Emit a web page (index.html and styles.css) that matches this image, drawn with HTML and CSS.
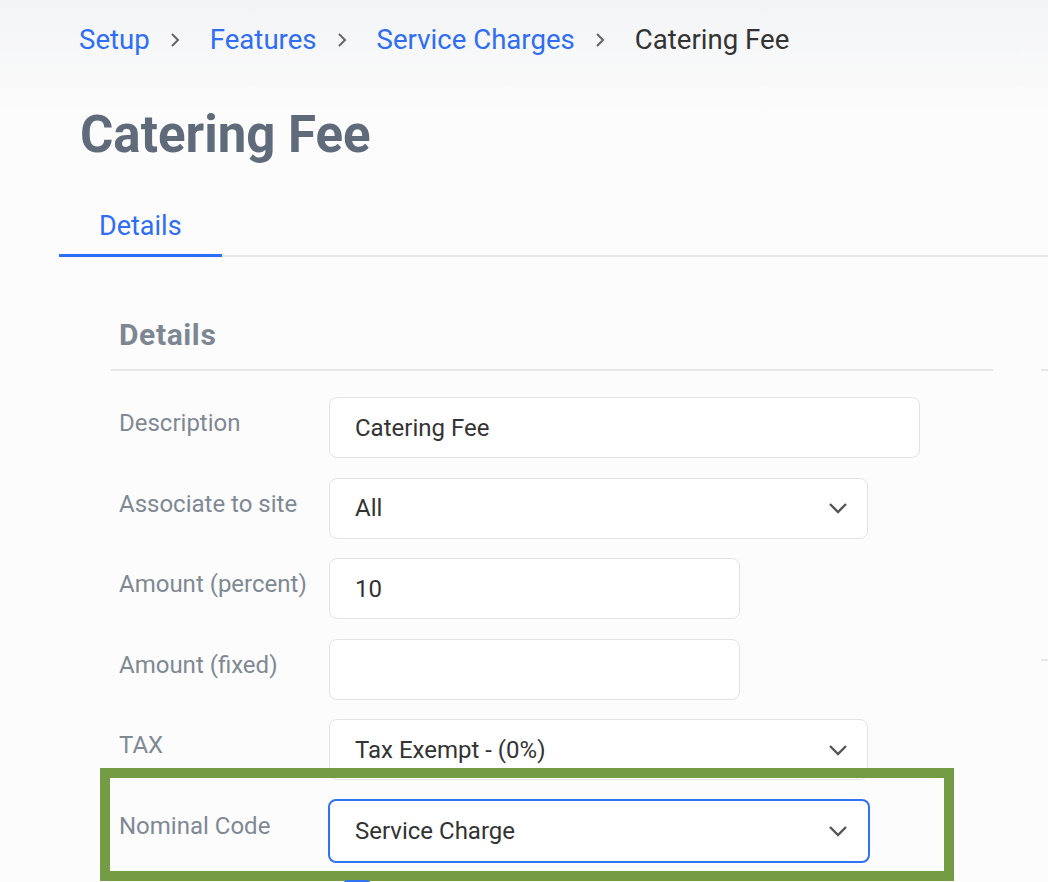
FILE: index.html
```html
<!DOCTYPE html>
<html lang="en">
<head>
    <meta charset="UTF-8">
    <meta name="viewport" content="width=device-width, initial-scale=1.0">
    <title>Catering Fee</title>
    <link rel="stylesheet" href="styles.css">
</head>
<body>
    <div class="header">
        <div class="breadcrumb">
            <a href="#">Setup</a>
            <svg class="crumb-sep" width="12" height="18" viewBox="0 0 12 18"><polyline points="3,3 9,9 3,15" fill="none" stroke="#666" stroke-width="2"/></svg>
            <a href="#">Features</a>
            <svg class="crumb-sep" width="12" height="18" viewBox="0 0 12 18"><polyline points="3,3 9,9 3,15" fill="none" stroke="#666" stroke-width="2"/></svg>
            <a href="#">Service Charges</a>
            <svg class="crumb-sep" width="12" height="18" viewBox="0 0 12 18"><polyline points="3,3 9,9 3,15" fill="none" stroke="#666" stroke-width="2"/></svg>
            <span class="current">Catering Fee</span>
        </div>
        <h1 class="page-title">Catering Fee</h1>
    </div>

    <div class="tabs">
        <a href="#" class="tab active">Details</a>
    </div>

    <div class="content">
        <section class="panel">
            <h3 class="panel-title">Details</h3>
            <div class="form">
                <div class="row">
                    <label>Description</label>
                    <div class="field wide">Catering Fee</div>
                </div>
                <div class="row">
                    <label>Associate to site</label>
                    <div class="field select">All
                        <svg class="chev" width="20" height="12" viewBox="0 0 20 12"><polyline points="2,2 10,10 18,2" fill="none" stroke="#555" stroke-width="2.4"/></svg>
                    </div>
                </div>
                <div class="row">
                    <label>Amount (percent)</label>
                    <div class="field narrow">10</div>
                </div>
                <div class="row">
                    <label>Amount (fixed)</label>
                    <div class="field narrow"></div>
                </div>
                <div class="row">
                    <label>TAX</label>
                    <div class="field select">Tax Exempt - (0%)
                        <svg class="chev" width="20" height="12" viewBox="0 0 20 12"><polyline points="2,2 10,10 18,2" fill="none" stroke="#555" stroke-width="2.4"/></svg>
                    </div>
                </div>
                <div class="row highlight">
                    <label>Nominal Code</label>
                    <div class="field select focused">Service Charge
                        <svg class="chev" width="20" height="12" viewBox="0 0 20 12"><polyline points="2,2 10,10 18,2" fill="none" stroke="#555" stroke-width="2.4"/></svg>
                    </div>
                </div>
                <div class="row">
                    <label></label>
                    <div class="checkbox"></div>
                </div>
            </div>
        </section>
        <aside class="side">
            <div class="side-block top"></div>
            <div class="side-block"></div>
        </aside>
    </div>
</body>
</html>
```

FILE: styles.css
```css
body {
    margin: 0;
    font-family: Roboto, "Liberation Sans", sans-serif;
    background-color: #fcfcfc;
    color: #333;
    overflow: hidden;
}
.header {
    background: linear-gradient(#f3f4f6, #fcfcfc 120px);
    padding: 24px 0 0 79px;
    height: 166px;
    box-sizing: border-box;
}
.breadcrumb {
    display: flex;
    align-items: center;
    font-size: 27.6px;
    line-height: 32px;
}
.breadcrumb a {
    color: #2f6df6;
    text-decoration: none;
}
.crumb-sep {
    margin: 0 29px 0 19px;
}
.current {
    color: #333;
}
.page-title {
    margin: 49px 0 0 1px;
    font-size: 51px;
    line-height: 60px;
    font-weight: bold;
    color: #5f6b7a;
}
.tabs {
    margin-left: 59px;
    border-bottom: 2px solid #e6e6e6;
    display: flex;
}
.tab {
    display: block;
    padding: 43px 40px 11px 40px;
    font-size: 27px;
    line-height: 34px;
    color: #2f6df6;
    text-decoration: none;
    margin-bottom: -2px;
}
.tab.active {
    border-bottom: 3px solid #2f6df6;
}
.content {
    display: flex;
    padding-left: 111px;
}
.panel {
    width: 882px;
}
.panel-title {
    margin: 0;
    padding: 62px 0 18px 8px;
    font-size: 30px;
    line-height: 32px;
    letter-spacing: 0.6px;
    font-weight: bold;
    color: #7d8793;
    border-bottom: 2px solid #e6e6e6;
}
.form {
    padding: 26px 0 0 8px;
}
.row {
    display: flex;
    margin-bottom: 19.6px;
    position: relative;
}
.row label {
    width: 210px;
    flex-shrink: 0;
    font-size: 24px;
    line-height: 30px;
    padding-top: 11px;
    color: #7f8994;
}
.field {
    height: 61px;
    box-sizing: border-box;
    border: 1.5px solid #e3e3e3;
    border-radius: 8px;
    background-color: #fff;
    padding: 0 24px 0 25px;
    font-size: 24px;
    display: flex;
    align-items: center;
    color: #333;
}
.field.wide {
    width: 591px;
}
.field.narrow {
    width: 411px;
}
.field.select {
    width: 539px;
    justify-content: space-between;
    padding-right: 19px;
}
.field.focused {
    border: 2px solid #3172f2;
    width: 542px;
    height: 64px;
    margin: -1px 0 0 -1px;
    padding-right: 20px;
}
.highlight::after {
    content: "";
    position: absolute;
    left: -19px;
    top: -32px;
    width: 854px;
    height: 113px;
    border: 10px solid #749c45;
    box-sizing: border-box;
}
.highlight {
    margin-bottom: 17px;
}
.checkbox {
    width: 30px;
    height: 30px;
    margin-left: 13px;
    border-radius: 6px;
    background-color: #3172f2;
}
.side {
    margin-left: 48px;
    flex: 1;
}
.side-block {
    border-bottom: 2px solid #e6e6e6;
}
.side-block.top {
    height: 112px;
}
.side-block + .side-block {
    height: 288px;
}
```
